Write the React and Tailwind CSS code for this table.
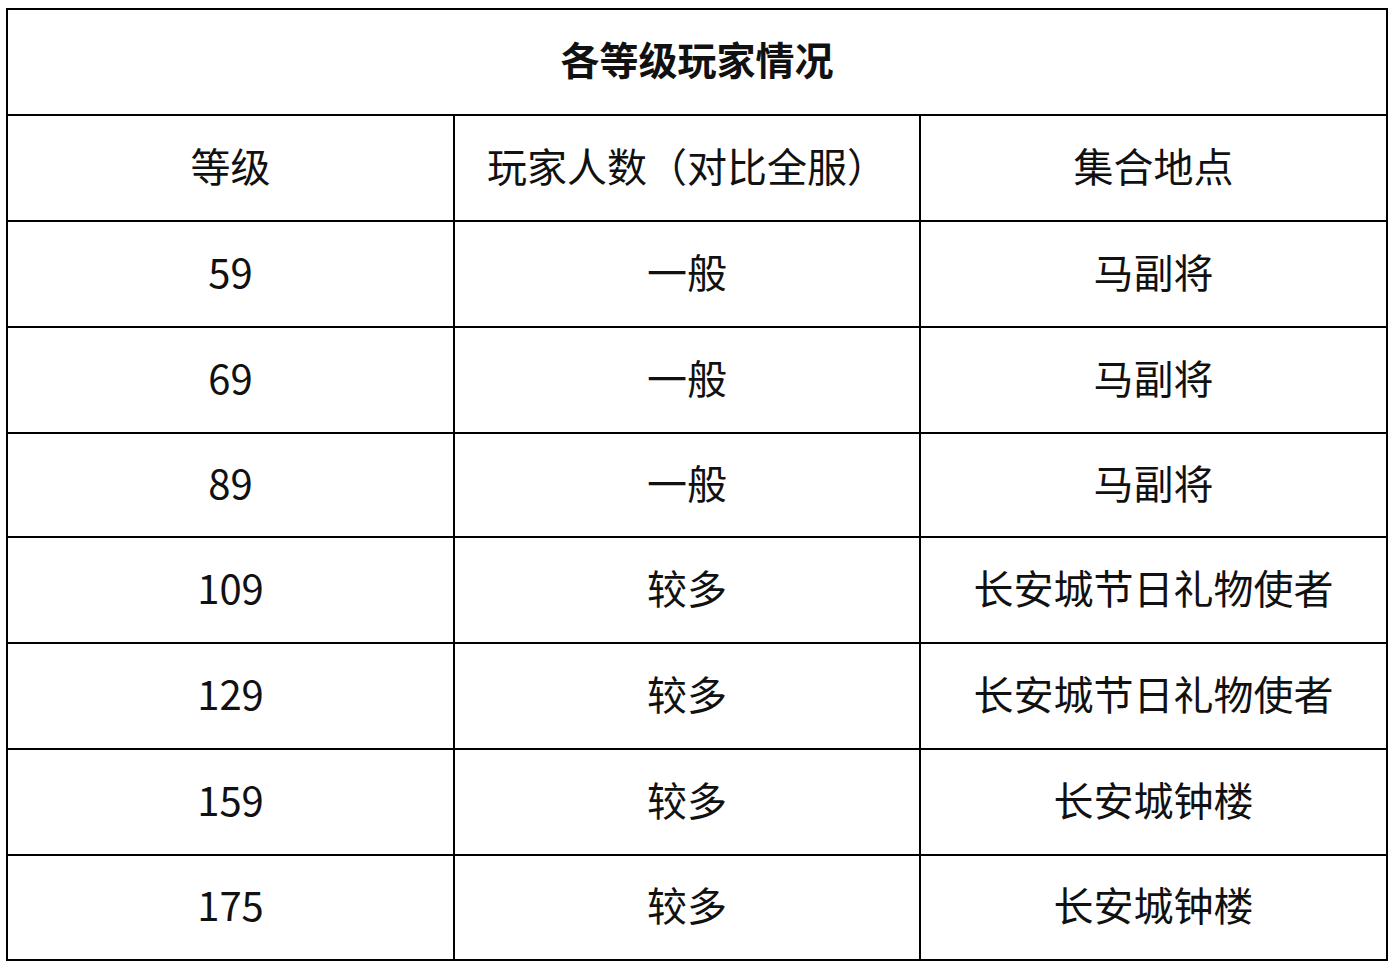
import React from 'react'

const rows = [
  ['59', '一般', '马副将'],
  ['69', '一般', '马副将'],
  ['89', '一般', '马副将'],
  ['109', '较多', '长安城节日礼物使者'],
  ['129', '较多', '长安城节日礼物使者'],
  ['159', '较多', '长安城钟楼'],
  ['175', '较多', '长安城钟楼'],
]

const Cell = ({ children, last }) => (
  <div className={`flex items-center justify-center pb-[7px] ${last ? '' : 'border-r-2 border-black'}`}>
    {children}
  </div>
)

const Row = ({ cells, last, short }) => (
  <div
    className={`grid grid-cols-[447px_466px_1fr] ${
      last ? 'h-[103px]' : short ? 'h-[104px] border-b-2 border-black' : 'h-[106px] border-b-2 border-black'
    }`}
  >
    {cells.map((c, i) => (
      <Cell key={i} last={i === cells.length - 1}>{c}</Cell>
    ))}
  </div>
)

export default function App() {
  return (
    <div
      className="w-[1394px] h-[970px] bg-white pl-[6px] pt-[8px] text-[#111]"
      style={{ fontFamily: '"Noto Sans CJK SC", "Noto Sans", sans-serif' }}
    >
      <div className="w-[1382px] border-2 border-black text-[40px] leading-none">
        <div className="h-[106px] border-b-2 border-black flex items-center justify-center pb-[7px]">
          <span className="font-bold text-[39px]">各等级玩家情况</span>
        </div>
        <Row cells={['等级', '玩家人数（对比全服）', '集合地点']} />
        {rows.map((r, i) => (
          <Row key={i} cells={r} short={i === 2} last={i === rows.length - 1} />
        ))}
      </div>
    </div>
  )
}
